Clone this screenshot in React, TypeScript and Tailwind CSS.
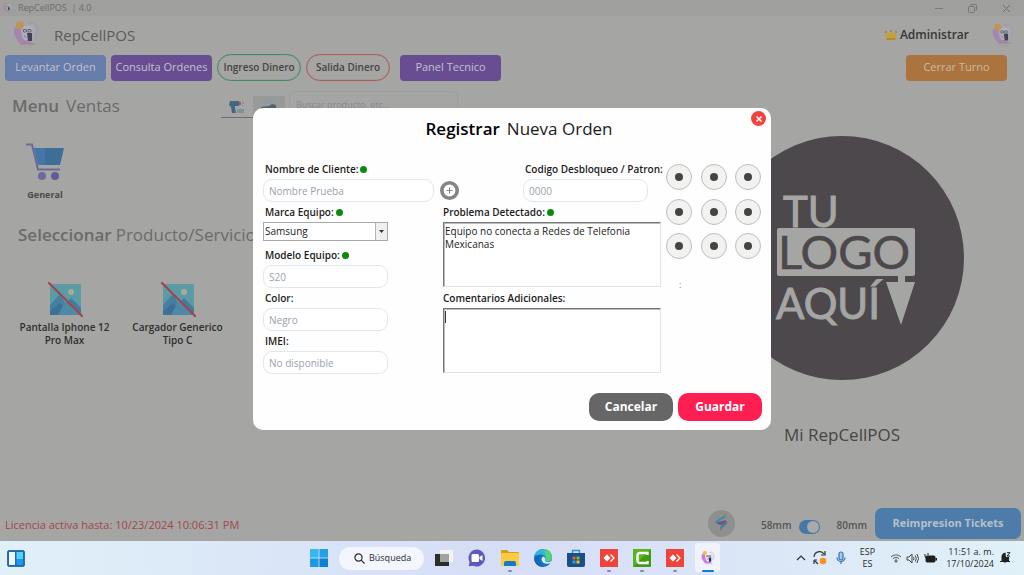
import React, { useId } from "react";

function RepairMark({ className, faded }: { className: string; faded?: boolean }) {
  return (
    <svg viewBox="0 0 26 28" className={className} aria-hidden="true">
      <circle cx="17" cy="11" r="8" fill={faded ? "#a7a9ae" : "#e4e6f4"} />
      <path d="M15 3c6-3 10 2 9 7l-2 7" fill="none" stroke={faded ? "#999ea9" : "#c3c8e6"} strokeWidth="1.5" />
      <path d="M2 6c4-1 6 1 6 5l1 6 12 6H9c-4-1-4-4-6-6C1 14 0 9 2 6z" fill={faded ? "#a584ae" : "#c77bea"} />
      <circle cx="7" cy="4" r="4" fill={faded ? "#bf9552" : "#ffb340"} />
      <path d="M10 6q6-3 9 1v8q-1 5-8 4-3-6-1-13z" fill={faded ? "#b0b1b8" : "#f4f5fb"} />
      <path d="M10.500 8.500h3v2.500h-3zM15 8.500h3v2.500h-3z" fill="none" stroke={faded ? "#62667c" : "#3c4268"} strokeWidth="1" />
      <path d="M11 14l2 3" stroke={faded ? "#7a7c88" : "#555"} strokeWidth="1" />
      <path d="M14 12h5v8h-4z" fill={faded ? "#3f4358" : "#252b52"} />
      <path d="M7 23h15" stroke={faded ? "#a3808d" : "#e98bb0"} strokeWidth="1" />
      <path d="M8 26h11" stroke={faded ? "#97a09b" : "#c7d6e0"} strokeWidth="1" strokeDasharray="2 1" />
    </svg>
  );
}

function CartIcon() {
  return (
    <svg viewBox="0 0 38 38" className="h-[38px] w-[38px]" aria-hidden="true">
      <path d="M8 5h30l-4 17H12z" fill="#3d6f96" />
      <path d="M8 5h11v17h-7z" fill="#4377aa" />
      <path d="M0 1.500h6l6 25h22" fill="none" stroke="#6b6a9d" strokeWidth="2" />
      <circle cx="16" cy="33" r="4" fill="#6b6a9d" />
      <circle cx="29" cy="33" r="4" fill="#5f5e92" />
    </svg>
  );
}

function NoPicture() {
  return (
    <svg viewBox="0 0 36 36" className="h-9 w-9" aria-hidden="true">
      <rect x="3" y="2" width="31" height="31" rx="1" fill="#5b9ba5" />
      <path d="M3 23l10-11 12 21H3z" fill="#4580a0" />
      <path d="M13 28l11-12 10 10v7H13z" fill="#437c9c" />
      <path d="M3 29l10-8 4 4-6 8H3z" fill="#3b7195" />
      <path d="M17 22l4-3 13 14H11z" fill="#4f89a8" />
      <circle cx="24" cy="10" r="3" fill="#a9aa94" />
      <path d="M2 1l33 33" stroke="#a34550" strokeWidth="2.200" strokeLinecap="round" />
    </svg>
  );
}

function ScannerIcon() {
  return (
    <svg viewBox="0 0 16 14" className="h-[14px] w-4" aria-hidden="true">
      <path d="M1 1h9l1 2-1 3H6v2l1 5H3L2 7 0 5z" fill="#446680" />
      <path d="M10 2h2v3h-2z" fill="#8f6070" />
      <path d="M13 1l1-1M13 3h2M13 5l1 1" stroke="#b0707a" />
      <rect x="8" y="9" width="7" height="4" fill="#7b929c" />
    </svg>
  );
}

function CrownIcon() {
  return (
    <svg viewBox="0 0 12 11" className="h-[11px] w-3" aria-hidden="true">
      <path d="M.5 2.500l3 1L6 1.500l2.500 2 3-1L10.500 10h-9z" fill="#c4a03c" />
      <path d="M1.200 8h9.600l-.3 2h-9z" fill="#b58a2e" />
      <circle cx="1" cy="2" r=".9" fill="#a8704a" />
      <circle cx="6" cy="1" r=".9" fill="#a8704a" />
      <circle cx="11" cy="2" r=".9" fill="#a8704a" />
    </svg>
  );
}

function YourLogo() {
  return (
    <svg viewBox="0 0 244 244" className="h-[244px] w-[244px]" role="img" aria-label="Tu logo aquí">
      <circle cx="122" cy="122" r="122" fill="#4c484b" />
      <g fontFamily="Lato, sans-serif">
        <text x="63" y="91" fontSize="42" fill="#a5a5a3" stroke="#a5a5a3" strokeWidth="1">TU</text>
        <rect x="57" y="92" width="138" height="48" rx="2" fill="#a5a5a3" />
        <text x="58" y="133" fontSize="47" fill="#4c484b" stroke="#4c484b" strokeWidth=".6">LOGO</text>
        <text x="56" y="183" fontSize="42" fill="#a5a5a3" stroke="#a5a5a3" strokeWidth="1">AQUÍ</text>
      </g>
      <path d="M178 140h7v6h10l-14 43-15-43h12z" fill="#a5a5a3" />
    </svg>
  );
}

function FieldLabel({ id, label, required, inset }: { id: string; label: string; required?: boolean; inset?: boolean }) {
  return (
    <label htmlFor={id} className={`flex h-[19px] items-center gap-[2px] whitespace-nowrap text-[10px] font-semibold text-[#1c1c1c] ${inset ? "pl-0.5" : ""}`}>
      {label}
      {required && <span className="h-[7px] w-[7px] rounded-full bg-[#0a8a0a]" />}
    </label>
  );
}

function TextField({ label, placeholder, required, width }: { label: string; placeholder: string; required?: boolean; width: string }) {
  const id = useId();
  return (
    <div className={`h-[43px] ${width}`}>
      <FieldLabel id={id} label={label} required={required} inset />
      <input
        id={id}
        type="text"
        placeholder={placeholder}
        className="block h-[23px] w-full rounded-[9px] border border-[#dfe8f0] bg-white px-[5px] text-[10px] text-[#333] outline-none placeholder:text-[#99a1ad]"
      />
    </div>
  );
}

function NotesField({ label, value, required, caret }: { label: string; value: string; required?: boolean; caret?: boolean }) {
  const id = useId();
  return (
    <div className="relative h-[86px]">
      <FieldLabel id={id} label={label} required={required} />
      <textarea
        id={id}
        defaultValue={value}
        className="block h-[65px] w-full resize-none border border-[#e3e3e3] border-l-[#777] border-t-[#777] bg-white px-px py-0.5 text-[10px] leading-[13px] text-[#222] shadow-[inset_1px_1px_0_#bbb] outline-none"
      />
      {caret && <span className="absolute left-[2px] top-[22px] h-3 w-px bg-[#333]" />}
    </div>
  );
}

function OrderDialog() {
  const brandId = useId();
  return (
    <section role="dialog" aria-label="Registrar Nueva Orden" className="relative flex w-[518px] flex-col rounded-[10px] bg-[#fefefe] px-2.5 pb-[9px]">
      <button type="button" aria-label="Cerrar" className="absolute right-[5px] top-[3px] flex h-[15px] w-[15px] items-center justify-center rounded-full bg-[#f4433a]">
        <svg viewBox="0 0 8 8" className="h-2 w-2" aria-hidden="true">
          <path d="M1.500 1.500l5 5M6.500 1.500l-5 5" stroke="#fff" strokeWidth="1.500" />
        </svg>
      </button>
      <h2 className="flex h-[41px] items-center justify-center gap-[7px] pl-[14px] text-[17px] text-[#1b1b1b]">
        <strong className="font-semibold text-black">Registrar</strong>
        <span>Nueva Orden</span>
      </h2>
      <div className="mt-[11px] flex">
        <div className="w-[399px]">
          <div className="flex h-[43px]">
            <TextField label="Nombre de Cliente:" placeholder="Nombre Prueba" required width="w-[171px]" />
            <button type="button" aria-label="Agregar cliente" className="ml-1.5 mt-[21px] h-[19px] w-[19px]">
              <svg viewBox="0 0 19 19" className="h-[19px] w-[19px]" aria-hidden="true">
                <circle cx="9.500" cy="9.500" r="7.700" fill="#fefefe" stroke="#858585" strokeWidth="3.600" />
                <path d="M9.500 6.500v6M6.500 9.500h6" stroke="#858585" strokeWidth="1" />
              </svg>
            </button>
            <div className="ml-auto mr-[13px]">
              <TextField label="Codigo Desbloqueo / Patron:" placeholder="0000" width="w-[125px]" />
            </div>
          </div>
          <div className="flex justify-between">
            <div className="w-[125px]">
              <div className="h-[43px]">
                <FieldLabel id={brandId} label="Marca Equipo:" required inset />
                <div className="relative h-[19px]">
                  <select id={brandId} defaultValue="Samsung" className="block h-full w-full appearance-none border border-[#a9a9a9] bg-white pl-px text-[10px] text-[#222] outline-none">
                    <option>Samsung</option>
                  </select>
                  <span className="pointer-events-none absolute bottom-px right-px top-px flex w-3 items-center justify-center border-l border-[#b5b5b5] bg-[#f0f0f0]">
                    <svg viewBox="0 0 5 3" className="h-[3px] w-[5px]" aria-hidden="true">
                      <path d="M0 0h5L2.500 3z" fill="#333" />
                    </svg>
                  </span>
                </div>
              </div>
              <TextField label="Modelo Equipo:" placeholder="S20" required width="w-full" />
              <TextField label="Color:" placeholder="Negro" width="w-full" />
              <TextField label="IMEI:" placeholder="No disponible" width="w-full" />
            </div>
            <div className="w-[218px]">
              <NotesField label="Problema Detectado:" value="Equipo no conecta a Redes de Telefonia Mexicanas" required />
              <NotesField label="Comentarios Adicionales:" value="" caret />
            </div>
          </div>
        </div>
        <div className="ml-[5px] pt-1">
          <div className="grid h-[95px] w-[95px] grid-cols-[repeat(3,26px)] content-between justify-between">
            {[1, 2, 3, 4, 5, 6, 7, 8, 9].map((n) => (
              <button key={n} type="button" aria-label={`Punto ${n}`} className="flex h-[26px] w-[26px] items-center justify-center rounded-full border border-[#bdbdbd] bg-[#f2f2f1]">
                <span className="h-2 w-2 rounded-full bg-[#444]" />
              </button>
            ))}
          </div>
          <p className="pl-[13px] pt-5 text-[9px] leading-3 text-[#888]">:</p>
        </div>
      </div>
      <div className="mt-[18px] flex justify-end gap-[5px]">
        <button type="button" className="h-7 w-[84px] rounded-[10px] bg-[#666] text-[12px] font-bold text-white">Cancelar</button>
        <button type="button" className="-mr-px h-7 w-[84px] rounded-[10px] bg-[#fd1f52] text-[12px] font-bold text-white">Guardar</button>
      </div>
    </section>
  );
}

function Product({ lines }: { lines: string[] }) {
  return (
    <button type="button" className="flex w-[113px] flex-col items-center text-[10px] font-semibold leading-[13px] text-[#2e2e2e]">
      <NoPicture />
      <span className="mt-[3px] block">
        {lines.map((line) => (
          <span key={line} className="block whitespace-nowrap">{line}</span>
        ))}
      </span>
    </button>
  );
}

function PosWindow() {
  return (
    <div className="relative flex min-h-[541px] flex-1 flex-col bg-[#a5a5a3]">
      <div className="flex h-4 items-center bg-[#9f9f9d] pl-[3px] pr-[13px] text-[9px] text-[#6c6c6c]">
        <RepairMark className="h-[10px] w-[9px]" faded />
        <span className="ml-1.5 whitespace-pre">RepCellPOS  | 4.0</span>
        <div className="ml-auto flex items-center gap-[25px]">
          <button type="button" aria-label="Minimizar" className="h-px w-2 bg-[#7b7b7b]" />
          <button type="button" aria-label="Restaurar">
            <svg viewBox="0 0 9 9" className="h-[9px] w-[9px]" fill="none" stroke="#757575" aria-hidden="true">
              <rect x=".5" y="2.500" width="6" height="6" rx="1" />
              <path d="M2.500 1.500q0-1 1-1h4q1 0 1 1v4q0 1-1 1" />
            </svg>
          </button>
          <button type="button" aria-label="Cerrar ventana">
            <svg viewBox="0 0 9 9" className="h-[9px] w-[9px]" stroke="#707070" aria-hidden="true">
              <path d="M1 1l7 7M8 1L1 8" />
            </svg>
          </button>
        </div>
      </div>

      <header className="flex h-[38px] items-center pl-[13px] pr-2.5">
        <RepairMark className="h-7 w-[26px]" faded />
        <h1 className="ml-[15px] text-[15px] text-[#5b5b5b]">RepCellPOS</h1>
        <button type="button" className="ml-auto flex items-center gap-[3px] text-[12px] font-semibold text-[#363636]">
          <CrownIcon />
          Administrar
        </button>
        <RepairMark className="ml-[23px] h-[25px] w-[22px]" faded />
      </header>

      <nav className="flex items-center pl-[5px] pr-[17px] text-[11px] text-[#c4c2cc]">
        <button type="button" className="h-[26px] w-[101px] rounded bg-[#667cab]">Levantar Orden</button>
        <button type="button" className="ml-[5px] h-[26px] w-[101px] whitespace-nowrap rounded bg-[#684d93]">Consulta Ordenes</button>
        <button type="button" className="ml-[5px] h-[27px] w-[84px] whitespace-nowrap rounded-full border border-[#3f8c60] text-[10px] font-semibold text-[#444] shadow-[inset_0_0_1px_#3f8c60]">Ingreso Dinero</button>
        <button type="button" className="ml-[5px] h-[27px] w-[84px] whitespace-nowrap rounded-full border border-[#b05a58] text-[10px] font-semibold text-[#444] shadow-[inset_0_0_1px_#b05a58]">Salida Dinero</button>
        <button type="button" className="ml-[10px] h-[26px] w-[101px] rounded bg-[#684d93]">Panel Tecnico</button>
        <button type="button" className="ml-auto h-[26px] w-[101px] rounded bg-[#ab743f] text-[#cbb9a7]">Cerrar Turno</button>
      </nav>

      <main className="flex flex-1 justify-between">
        <div>
          <div className="flex h-[47px] items-start pt-[10px]">
            <h2 className="flex w-[210px] gap-[7px] pl-3 text-[17px] leading-[30px] text-[#6b6b6b]">
              <strong className="font-semibold">Menu</strong>
              <span>Ventas</span>
            </h2>
            <div className="ml-[11px] mt-[5px] flex h-[22px] border-b border-[#6e6e6e]">
              <button type="button" aria-label="Lector de código" className="flex w-8 items-center justify-center"><ScannerIcon /></button>
              <button type="button" aria-label="Búsqueda manual" className="flex w-8 justify-center bg-[#999] pt-[3px]">
                <svg viewBox="0 0 18 12" className="h-3 w-[18px]" aria-hidden="true">
                  <path d="M2 1h14M1 3.500h12" stroke="#8399a6" />
                  <path d="M1 10V8l8-1 3-2 4 1v5z" fill="#52636d" />
                </svg>
              </button>
            </div>
            <input type="search" aria-label="Buscar producto" placeholder="Buscar producto, etc..." className="ml-1 h-[27px] w-[169px] rounded-md border border-[#97a1a3] bg-transparent px-1.5 text-[9px] outline-none placeholder:text-[#858995]" />
          </div>
          <button type="button" className="ml-[26px] mt-[15px] flex flex-col items-center text-[9px] font-bold leading-3 text-[#4a4a4a]">
            <CartIcon />
            <span className="mt-2">General</span>
          </button>
          <h2 className="mt-[19px] flex gap-1 pl-[18px] text-[17px] leading-[30px] text-[#6b6b6b]">
            <strong className="font-semibold">Seleccionar</strong>
            <span>Producto/Servicio</span>
          </h2>
          <div className="mt-8 flex pl-2">
            <Product lines={["Pantalla Iphone 12", "Pro Max"]} />
            <Product lines={["Cargador Generico", "Tipo C"]} />
          </div>
        </div>
        <aside className="flex flex-col items-center pr-[60px] pt-[55px]">
          <YourLogo />
          <p className="mt-[43px] text-[17px] font-medium leading-6 text-[#464646]">Mi RepCellPOS</p>
        </aside>
      </main>

      <footer className="flex h-9 items-center pl-[5px] pr-[3px]">
        <p className="pt-1 text-[11px] text-[#a1474a]">Licencia activa hasta: 10/23/2024 10:06:31 PM</p>
        <div className="ml-auto flex items-center">
          <button type="button" aria-label="Soporte" className="flex h-[27px] w-[27px] items-center justify-center rounded-full bg-[#8f8f8d]">
            <svg viewBox="0 0 14 18" className="h-[18px] w-[14px]" aria-hidden="true">
              <path d="M12 0C10 3 2 5 1 9l6 1 5-3C9 7 6 7 5 7c2-2 7-2 7-7z" fill="#3f8f99" />
              <path d="M2 9l10-3-1 4-5 1z" fill="#71528a" />
              <path d="M13 7c1 5-5 4-6 10-2-5 1-7 6-10z" fill="#467a9a" />
            </svg>
          </button>
          <label htmlFor="paper" className="ml-[26px] pt-1 text-[10px] font-semibold text-[#555]">58mm</label>
          <input id="paper" type="checkbox" role="switch" defaultChecked className="relative ml-2 mt-2 h-[14px] w-[21px] appearance-none rounded-full bg-[#4378a8] before:absolute before:right-px before:top-px before:h-3 before:w-3 before:rounded-full before:bg-[#a9a9a9]" />
          <span className="ml-4 pt-1 text-[10px] font-semibold text-[#555]">80mm</span>
          <button type="button" className="ml-2 h-[31px] w-[146px] rounded-[7px] bg-[#4d7cab] text-[11px] font-bold text-[#b7c0c8]">Reimpresion Tickets</button>
        </div>
      </footer>

      <div className="absolute inset-0 flex items-center justify-center pb-[3px]">
        <OrderDialog />
      </div>
    </div>
  );
}

function TaskButton({ name, running, active, children }: { name: string; running?: boolean; active?: boolean; children: React.ReactNode }) {
  return (
    <button type="button" aria-label={name} className="relative flex h-[34px] w-[33px] items-center justify-center">
      {active && <span className="absolute inset-x-1 bottom-[3px] top-[2px] rounded-[3px] bg-[#f0f3fd]" />}
      <span className="relative">{children}</span>
      {running && <span className="absolute bottom-[3px] h-0.5 w-1 rounded-full bg-[#858b9c]" />}
      {active && <span className="absolute bottom-[3px] h-0.5 w-3 rounded-full bg-[#1179cf]" />}
    </button>
  );
}

function AnyDesk() {
  return (
    <svg viewBox="0 0 18 18" className="block h-[18px] w-[18px]" aria-hidden="true">
      <path d="M0 0h18v18H0z" fill="#ef443b" />
      <path d="M3.500 9l3.500-3.500L10.500 9 7 12.500z" fill="#fff" />
      <path d="M10.500 5.500L14 9l-3.500 3.500" fill="none" stroke="#fff" strokeWidth="1.300" />
    </svg>
  );
}

function Taskbar() {
  return (
    <div className="flex h-[34px] items-center bg-linear-to-r from-[#e0f0f8] via-[#d6ddf7] to-[#e1f1f8] text-[#2b2b30]">
      <div className="flex flex-1 pl-[7px]">
        <button type="button" aria-label="Widgets">
          <svg viewBox="0 0 18 17" className="h-[17px] w-[18px]" aria-hidden="true">
            <rect x=".7" y=".7" width="16.600" height="15.600" rx="1" fill="#1272bd" stroke="#175a97" />
            <path d="M2 2h6v13H2z" fill="#f3f6f8" />
            <path d="M9.500 2H16v7H9.500z" fill="#58d0fb" />
            <path d="M9.500 9H16v6H9.500z" fill="#1c9af0" />
          </svg>
        </button>
      </div>
      <div className="flex items-center pl-2">
        <TaskButton name="Inicio">
          <svg viewBox="0 0 18 18" className="block h-[18px] w-[18px]" aria-hidden="true">
            <path d="M0 0h8.600v8.600H0z" fill="#36b8ef" />
            <path d="M9.400 0H18v8.600H9.400z" fill="#22a2e6" />
            <path d="M0 9.400h8.600V18H0z" fill="#1c9be2" />
            <path d="M9.400 9.400H18V18H9.400z" fill="#0d82d2" />
          </svg>
        </TaskButton>
        <button type="button" className="ml-1 mr-[3px] flex h-[23px] w-[85px] items-center gap-1 rounded-full bg-[#f3f6fd] pl-[15px] text-[9px] font-medium">
          <svg viewBox="0 0 11 11" className="h-[11px] w-[11px]" fill="none" stroke="#2b2b30" strokeWidth="1.200" aria-hidden="true">
            <circle cx="4.500" cy="4.500" r="3.600" />
            <path d="M7.200 7.200l3.300 3.300" />
          </svg>
          Búsqueda
        </button>
        <TaskButton name="Vista de tareas">
          <svg viewBox="0 0 18 18" className="block h-[18px] w-[18px]" aria-hidden="true">
            <rect x="5" y="1" width="13" height="12" fill="#f4f4f2" />
            <path d="M0 5h14v12H0z" fill="#2c2c2c" />
            <path d="M5 5h9v8H5z" fill="#a1a3a3" />
          </svg>
        </TaskButton>
        <TaskButton name="Chat">
          <svg viewBox="0 0 18 18" className="block h-[18px] w-[18px]" aria-hidden="true">
            <path d="M9 .5A8.500 8.500 0 1 1 5 16.700L.8 17.300 1.500 13A8.500 8.500 0 0 1 9 .5z" fill="#6057bd" />
            <rect x="3.500" y="5" width="7.500" height="8" rx="1.500" fill="#fff" />
            <path d="M11.500 8l3-2v6l-3-2z" fill="#fff" />
          </svg>
        </TaskButton>
        <TaskButton name="Explorador" running>
          <svg viewBox="0 0 18 16" className="block h-4 w-[18px]" aria-hidden="true">
            <path d="M0 1q0-1 1-1h5l2 2h9q1 0 1 1v3H0z" fill="#d99b18" />
            <rect y="3" width="18" height="13" rx="1" fill="#fccb3f" />
            <path d="M3 16v-3q0-2 2-2h8q2 0 2 2v3z" fill="#1679c5" />
          </svg>
        </TaskButton>
        <TaskButton name="Edge">
          <svg viewBox="0 0 18 18" className="block h-[18px] w-[18px]" aria-hidden="true">
            <circle cx="9" cy="9" r="9" fill="#1677c6" />
            <path d="M.2 7.500C1 3 4.500 0 9 0c5 0 9 3.600 9 8 0 3-2.500 4.500-5 4.500-1.500 0-2.500-.7-2-1.500C12 9 11 5.500 7 5.500 3.500 5.500 1 6.500.2 7.500z" fill="#2fb6d8" />
            <path d="M10 0c5 .5 8 4 8 8 0 3-2.500 4.500-5 4.500-1.500 0-2.500-.7-2-1.500 1-1 1.500-3 .5-5z" fill="#58cf7c" />
            <path d="M11 11c-.5 1 .5 2 2 2 2 0 3.500-.5 4.300-1.500L16.500 14c-4 1.500-8.500.5-9-3.500 0-1.500.8-2.500 2-3 1.500 1 2 2.500 1.500 3.500z" fill="#dce8f8" />
            <path d="M7 6C4 8 5 15 10 17.500 5 18.500 1 15 .3 11 .2 8 3 5.500 7 6z" fill="#1567b5" />
          </svg>
        </TaskButton>
        <TaskButton name="Tienda">
          <svg viewBox="0 0 18 18" className="block h-[18px] w-[18px]" aria-hidden="true">
            <path d="M5.500 5V1.500h7V5" fill="none" stroke="#2b93d1" strokeWidth="1.400" />
            <path d="M0 4h18v12q0 2-2 2H2q-2 0-2-2z" fill="#184f88" />
            <path d="M5.500 7.500h3v3h-3z" fill="#f05b2c" />
            <path d="M9.500 7.500h3v3h-3z" fill="#83bb2b" />
            <path d="M5.500 11.500h3v3h-3z" fill="#25a3e5" />
            <path d="M9.500 11.500h3v3h-3z" fill="#fdb913" />
          </svg>
        </TaskButton>
        <TaskButton name="AnyDesk" running><AnyDesk /></TaskButton>
        <TaskButton name="Camtasia" running>
          <svg viewBox="0 0 18 18" className="block h-[18px] w-[18px]" aria-hidden="true">
            <rect width="18" height="18" rx="1" fill="#3f9c12" />
            <path d="M0 0h18L0 18z" fill="#59b41e" />
            <path d="M14.500 6V4H7Q4.500 4 4.500 6.500v5Q4.500 14 7 14h7.500v-2" fill="none" stroke="#fff" strokeWidth="2.400" />
          </svg>
        </TaskButton>
        <TaskButton name="AnyDesk 2" running><AnyDesk /></TaskButton>
        <TaskButton name="RepCellPOS" active><RepairMark className="block h-[15px] w-[14px]" /></TaskButton>
      </div>
      <div className="flex flex-1 items-center justify-end pr-[13px] text-[9px] leading-3">
        <svg viewBox="0 0 10 6" className="h-1.5 w-[10px]" fill="none" stroke="#333" strokeWidth="1.200" aria-hidden="true">
          <path d="M1 5l4-4 4 4" />
        </svg>
        <svg viewBox="0 0 14 14" className="ml-[7px] h-[14px] w-[14px]" fill="none" stroke="#333" strokeWidth="1.200" aria-hidden="true">
          <path d="M1 6a5.500 5.500 0 0 1 10-3M12 0v4H8M1 9v4M1 9h3M2 10l3 3" />
          <circle cx="10" cy="10" r="3.300" fill="#f7941d" stroke="none" />
        </svg>
        <svg viewBox="0 0 10 14" className="ml-[9px] h-[14px] w-[10px]" fill="none" stroke="#3973b5" strokeWidth="1.200" aria-hidden="true">
          <rect x="3" y="1" width="4" height="8" rx="2" fill="#a8c8ec" />
          <path d="M1 6.500a4 4 0 0 0 8 0M5 10.500V13" />
        </svg>
        <div className="ml-[14px] text-center">
          <p>ESP</p>
          <p>ES</p>
        </div>
        <svg viewBox="0 0 12 10" className="ml-[15px] h-[10px] w-3" fill="none" stroke="#555" aria-hidden="true">
          <path d="M1 4a7 7 0 0 1 10 0" />
          <path d="M2.800 5.800a4.500 4.500 0 0 1 6.400 0" />
          <path d="M4.500 7.500a2 2 0 0 1 3 0" />
          <circle cx="6" cy="8.500" r=".7" fill="#555" />
        </svg>
        <svg viewBox="0 0 13 11" className="ml-1 h-[11px] w-[13px]" fill="none" stroke="#444" aria-hidden="true">
          <path d="M1 4h2l3-3v9L3 7H1z" />
          <path d="M7.500 4q1 1.500 0 3M9.300 2.500q2 3 0 6M11 1q3 4.500 0 9" />
        </svg>
        <svg viewBox="0 0 13 11" className="ml-[5px] h-[11px] w-[13px]" aria-hidden="true">
          <rect x="2" y="3" width="9" height="6" rx="1" fill="#1e1e1e" stroke="#1e1e1e" />
          <path d="M11.500 5H13v2.500h-1.500z" fill="#1e1e1e" />
          <path d="M1 1v2q0 2 2 2M4 0v2" stroke="#1e1e1e" fill="none" />
        </svg>
        <div className="ml-[9px] whitespace-nowrap text-right">
          <p>11:51 a. m.</p>
          <p>17/10/2024</p>
        </div>
        <svg viewBox="0 0 11 12" className="ml-1.5 h-3 w-[11px]" aria-hidden="true">
          <path d="M0 9h1.500V5q0-4 4-4.500L6 5h3v4h1v1H0z" fill="#222" />
          <path d="M3.500 10.500q1.500 1.500 3 0z" fill="#222" />
          <path d="M7 .7h3L7 4h3" fill="none" stroke="#222" />
        </svg>
      </div>
    </div>
  );
}

export default function App() {
  return (
    <div className="flex min-h-screen flex-col font-['Open_Sans','Noto_Sans',sans-serif]">
      <PosWindow />
      <Taskbar />
    </div>
  );
}
